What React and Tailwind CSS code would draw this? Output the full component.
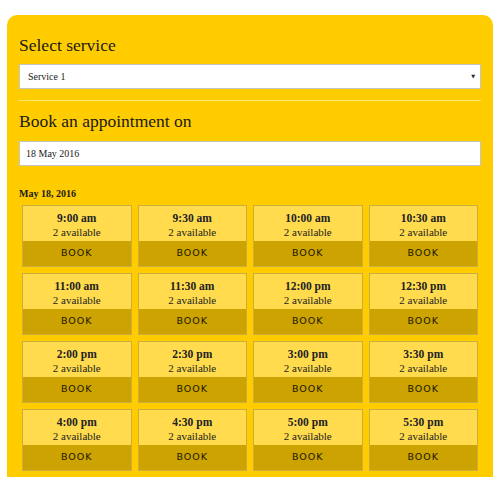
import React from 'react';

const slots = [
  '9:00 am', '9:30 am', '10:00 am', '10:30 am',
  '11:00 am', '11:30 am', '12:00 pm', '12:30 pm',
  '2:00 pm', '2:30 pm', '3:00 pm', '3:30 pm',
  '4:00 pm', '4:30 pm', '5:00 pm', '5:30 pm',
];

const serif = "font-['Liberation_Serif',serif]";

const SlotCard = ({ time }) => (
  <div className="m-[3px] border border-[#c9ae3a] flex flex-col">
    <div className="bg-[#ffdb4d] h-[35px] pt-[5px] flex flex-col items-center text-[11px] leading-[14px] text-[#222]">
      <span className="font-bold text-[11.5px]">{time}</span>
      <span>2 available</span>
    </div>
    <div className="bg-[#cca300] h-[25px] flex items-center justify-center font-['DejaVu_Sans',sans-serif] text-[9.5px] font-medium tracking-[1px] text-[#1a1600]">
      BOOK
    </div>
  </div>
);

const App = () => {
  return (
    <div className={`bg-white w-[500px] h-[500px] pt-[15px] pl-[7px] ${serif}`}>
      <div className="w-[486px] h-[462px] bg-[#ffcc00] rounded-t-[10px] px-[12px] pt-[18px]">
        <h2 className="text-[17.5px] leading-[24px] text-[#1a1a1a]">Select service</h2>
        <div className="mt-[7px] h-[25px] bg-white border border-[#c4c4c4] flex items-center justify-between pl-[8px] pr-[5px] text-[10px] text-[#222]">
          <span>Service 1</span>
          <span className="text-[5px] font-['DejaVu_Sans',sans-serif]">▼</span>
        </div>
        <div className="mt-[11px] h-px bg-[#ffe47a]" />
        <h2 className="mt-[8px] text-[17.5px] leading-[24px] text-[#1a1a1a]">Book an appointment on</h2>
        <div className="mt-[8px] h-[25px] bg-white border border-[#c4c4c4] flex items-center pl-[6px] text-[10px] text-[#222]">
          18 May 2016
        </div>
        <div className="mt-[21px] text-[10px] font-bold text-[#1a1a1a] leading-[14px]">May 18, 2016</div>
        <div className="mt-[1px] grid grid-cols-4">
          {slots.map((t) => (
            <SlotCard key={t} time={t} />
          ))}
        </div>
      </div>
    </div>
  );
};

export default App;
